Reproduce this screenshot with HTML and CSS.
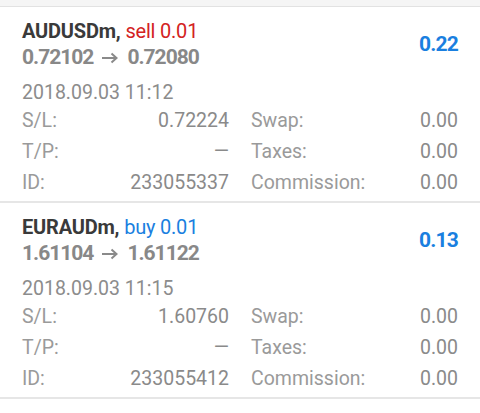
FILE: index.html
```html
<!DOCTYPE html>
<html>
<head>
<meta charset="utf-8">
<link rel="stylesheet" href="styles.css">
</head>
<body>
<div class="topbar"></div>
<div class="trade">
  <div class="head">
    <div class="head-main">
      <div class="title"><span class="sym">AUDUSDm,</span> <span class="sell">sell 0.01</span></div>
      <div class="prices">0.72102<svg class="arrow" width="16" height="12" viewBox="0 0 16 12"><path d="M0 6H14.5M9.5 1.5L14.5 6L9.5 10.5" fill="none" stroke="#8a8a8a" stroke-width="2"/></svg>0.72080</div>
    </div>
    <div class="profit">0.22</div>
  </div>
  <div class="date">2018.09.03 11:12</div>
  <div class="grid">
    <div class="cell"><span>S/L:</span><span>0.72224</span></div>
    <div class="cell"><span>Swap:</span><span>0.00</span></div>
    <div class="cell"><span>T/P:</span><span>—</span></div>
    <div class="cell"><span>Taxes:</span><span>0.00</span></div>
    <div class="cell"><span>ID:</span><span>233055337</span></div>
    <div class="cell"><span>Commission:</span><span>0.00</span></div>
  </div>
</div>
<div class="trade">
  <div class="head">
    <div class="head-main">
      <div class="title"><span class="sym">EURAUDm,</span> <span class="buy">buy 0.01</span></div>
      <div class="prices">1.61104<svg class="arrow" width="16" height="12" viewBox="0 0 16 12"><path d="M0 6H14.5M9.5 1.5L14.5 6L9.5 10.5" fill="none" stroke="#8a8a8a" stroke-width="2"/></svg>1.61122</div>
    </div>
    <div class="profit">0.13</div>
  </div>
  <div class="date">2018.09.03 11:15</div>
  <div class="grid">
    <div class="cell"><span>S/L:</span><span>1.60760</span></div>
    <div class="cell"><span>Swap:</span><span>0.00</span></div>
    <div class="cell"><span>T/P:</span><span>—</span></div>
    <div class="cell"><span>Taxes:</span><span>0.00</span></div>
    <div class="cell"><span>ID:</span><span>233055412</span></div>
    <div class="cell"><span>Commission:</span><span>0.00</span></div>
  </div>
</div>
</body>
</html>
```
FILE: styles.css
```css
html, body {
  margin: 0;
  padding: 0;
  background: #ffffff;
  font-family: Roboto, "Liberation Sans", sans-serif;
}
.topbar {
  height: 6px;
  background: #f5f5f5;
  border-bottom: 1px solid #e2e2e2;
}
.trade {
  padding: 12px 22px 0 22px;
  height: 196px;
  box-sizing: border-box;
  border-bottom: 2px solid #e6e6e6;
}
.head {
  display: flex;
  align-items: center;
  justify-content: space-between;
}
.title {
  font-size: 20px;
  line-height: 24px;
  color: #3a3a3a;
  letter-spacing: -0.2px;
}
.sym {
  font-weight: 700;
}
.sell {
  color: #d32222;
}
.buy {
  color: #1a7fe0;
}
.prices {
  margin-top: 2px;
  display: flex;
  align-items: center;
  font-size: 21px;
  line-height: 24px;
  font-weight: 700;
  color: #888888;
  letter-spacing: -1px;
}
.arrow {
  margin: 1px 9px 0 9px;
}
.profit {
  font-size: 21px;
  font-weight: 700;
  color: #1a7fe0;
  letter-spacing: -0.8px;
}
.date {
  margin-top: 12px;
  font-size: 19.5px;
  line-height: 24px;
  color: #8c8c8c;
}
.grid {
  margin-top: 0;
  display: grid;
  grid-template-columns: 1fr 1fr;
  column-gap: 22px;
}
.cell {
  display: flex;
  justify-content: space-between;
  font-size: 19.5px;
  line-height: 31px;
  color: #9a9a9a;
}
.cell span:last-child {
  color: #8a8a8a;
}
```
